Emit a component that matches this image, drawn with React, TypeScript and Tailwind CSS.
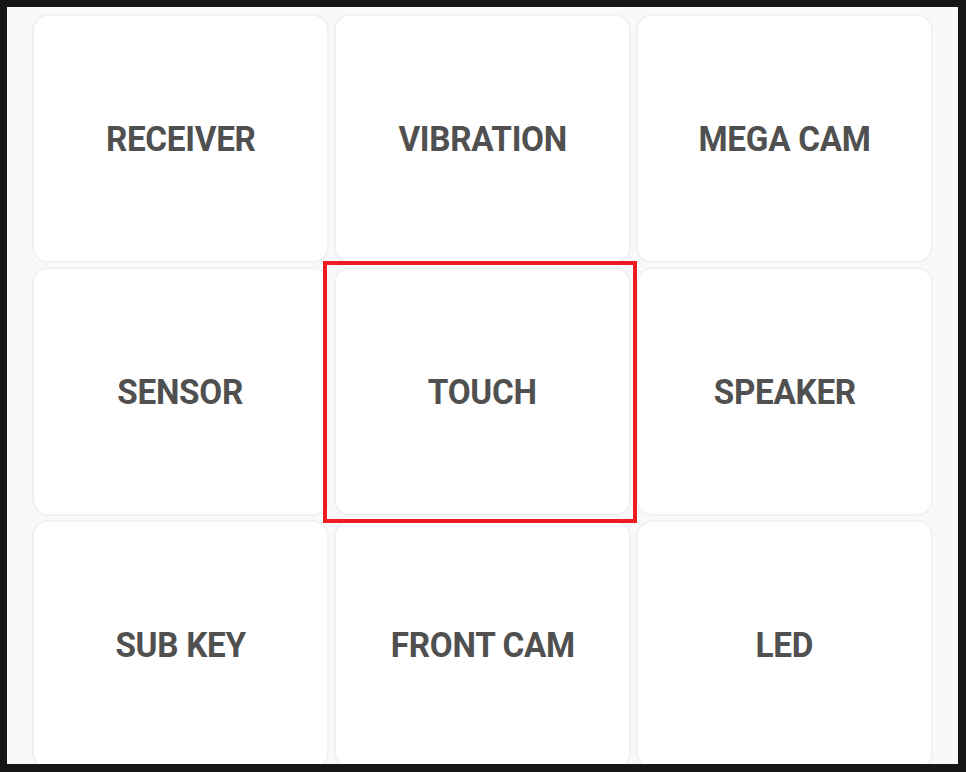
const ITEMS = [
  "RECEIVER",
  "VIBRATION",
  "MEGA CAM",
  "SENSOR",
  "TOUCH",
  "SPEAKER",
  "SUB KEY",
  "FRONT CAM",
  "LED",
];

export default function App() {
  return (
    <div className="h-[772px] w-[966px] bg-[#161616] pb-[8px] pl-[7px] pr-[8px] pt-[7px]">
      <div className="h-[757px] w-[951px] overflow-hidden bg-[#f9f9f9] px-[25px] pt-[7px]">
        <div className="grid grid-cols-[297px_297px_297px] grid-rows-[249px_249px_249px] gap-x-[5px] gap-y-[4px]">
          {ITEMS.map((label) => (
            <div key={label} className="relative">
              <div className="flex h-full w-full items-center justify-center rounded-[16px] border-2 border-[#f1f1f1] bg-white pt-[4px]">
                <span className="inline-block scale-x-95 whitespace-nowrap font-['Roboto',sans-serif] text-[35px] font-bold tracking-[-0.3px] text-[#505050]">
                  {label}
                </span>
              </div>
              {label === "TOUCH" && (
                <div className="pointer-events-none absolute -bottom-[7px] -left-[11px] -right-[6px] -top-[6px] z-10 border-4 border-[#ed1c24]" />
              )}
            </div>
          ))}
        </div>
      </div>
    </div>
  );
}
